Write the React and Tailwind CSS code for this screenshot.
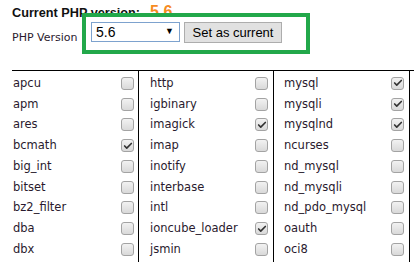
import { Check } from 'lucide-react'

const columns = [
  [
    ['apcu', false],
    ['apm', false],
    ['ares', false],
    ['bcmath', true],
    ['big_int', false],
    ['bitset', false],
    ['bz2_filter', false],
    ['dba', false],
    ['dbx', false],
  ],
  [
    ['http', false],
    ['igbinary', false],
    ['imagick', true],
    ['imap', false],
    ['inotify', false],
    ['interbase', false],
    ['intl', false],
    ['ioncube_loader', true],
    ['jsmin', false],
  ],
  [
    ['mysql', true],
    ['mysqli', true],
    ['mysqlnd', true],
    ['ncurses', false],
    ['nd_mysql', false],
    ['nd_mysqli', false],
    ['nd_pdo_mysql', false],
    ['oauth', false],
    ['oci8', false],
  ],
]

// column box classes, written out in full so tailwind picks them up
const colClass = [
  'w-[127px] pl-px pr-[4px]',
  'w-[135px] pl-[11px] pr-[5px]',
  'w-[136px] pl-[10px] pr-[5px]',
]

const Checkbox = ({ checked }) => (
  <div className="w-[13px] h-[13px] rounded-[3px] border border-[#a3a3a3] bg-gradient-to-b from-[#f2f2f2] to-[#d9d9d9] flex items-center justify-center">
    {checked && <Check className="w-[10px] h-[10px] text-[#333]" strokeWidth={4} />}
  </div>
)

export default function App() {
  return (
    <div className="relative w-[414px] h-[262px] bg-white overflow-hidden font-['DejaVu_Sans',sans-serif] pl-3">
      {/* header */}
      <div className="flex items-baseline h-[22px] pt-[4px]">
        <span className="font-['Liberation_Sans',sans-serif] font-bold text-[12.7px] leading-[16px] text-[#111]">
          Current PHP version:
        </span>
        <span className="ml-[10px] font-['Liberation_Sans',sans-serif] font-bold text-[16px] leading-[16px] text-[#f68b1f]">
          5.6
        </span>
      </div>

      {/* version picker */}
      <div className="flex items-start h-[21px]">
        <div className="w-[79px] mt-[9px] text-[11px] leading-[13px] text-[#2a1a2e]">PHP Version</div>
        <div className="w-[89px] h-[20px] border border-[#7da2ce] bg-white flex items-center justify-between pl-[4px] pr-[5px] font-['Liberation_Sans',sans-serif] text-[14px] text-black">
          <span>5.6</span>
          <span className="text-[9px]">▼</span>
        </div>
        <div className="ml-[4px] w-[98px] h-[21px] border border-[#adadad] bg-[#e1e1e1] flex items-center justify-center font-['Liberation_Sans',sans-serif] text-[13px] text-black">
          Set as current
        </div>
      </div>

      {/* annotation box over the picker */}
      <div className="absolute left-[82px] top-[13px] w-[228px] h-[41px] border-[4px] border-[#22a84a]" />

      {/* extension grid */}
      <div className="mt-[27px] flex border-t border-black">
        {columns.map((col, i) => (
          <div key={i} className={`${colClass[i]} border-r border-black pt-[2px] h-[200px]`}>
            {col.map(([name, checked]) => (
              <div key={name} className="h-[20.75px] flex items-center justify-between">
                <span className="text-[11.5px] text-[#2a1a2e]">{name}</span>
                <Checkbox checked={checked} />
              </div>
            ))}
          </div>
        ))}
      </div>
    </div>
  )
}
